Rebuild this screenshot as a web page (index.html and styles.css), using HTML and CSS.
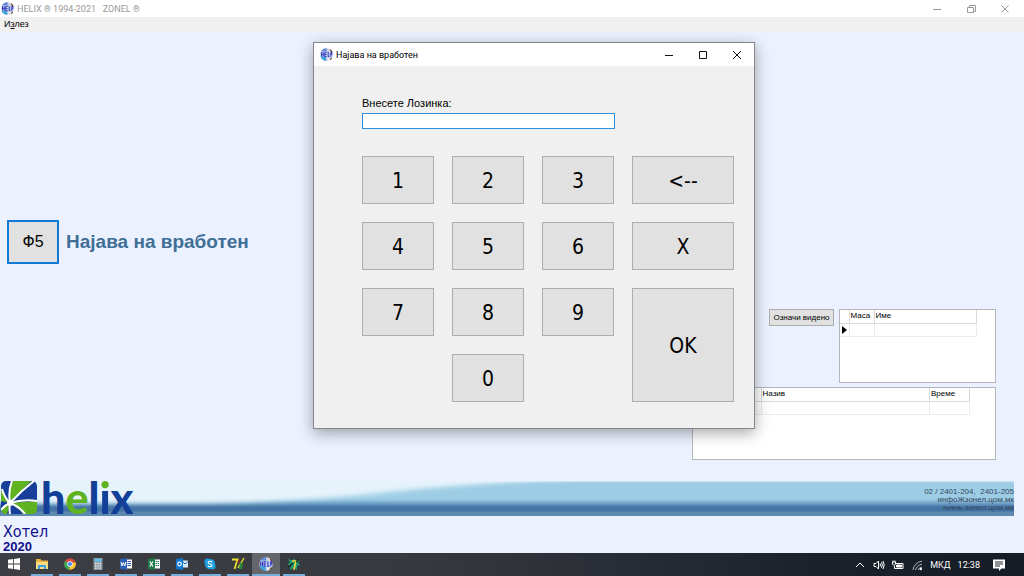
FILE: index.html
```html
<!DOCTYPE html>
<html lang="mk">
<head>
    <meta charset="UTF-8">
    <meta name="viewport" content="width=device-width, initial-scale=1.0">
    <title>HELIX</title>
    <link rel="stylesheet" href="styles.css">
</head>
<body>

<!-- Shared app icon -->
<svg class="defs" aria-hidden="true">
    <defs>
        <symbol id="app-icon" viewBox="0 0 12 12">
            <circle cx="6" cy="6" r="5.8" fill="#b9ccec"/>
            <path d="M1 3 A5.8 5.8 0 0 1 6 0.2 L6 3 Z" fill="#5f86d2"/>
            <path d="M7 0.4 A5.8 5.8 0 0 1 11 3.2 L8 3 Z" fill="#e6d8cc"/>
            <path d="M0.6 8 L5 8 L6 11.8 A5.8 5.8 0 0 1 0.6 8 Z" fill="#37a3dd"/>
            <path d="M6.5 9 L10.5 9 A5.8 5.8 0 0 1 7 11.7 Z" fill="#f4ede6"/>
            <path d="M9.5 1.5 L11.3 4 M10.8 9 L9.4 10.7" stroke="#59362f" fill="none"/>
            <path d="M1.4 3.8 V8 M3 3.8 V8 M1.4 6 H3 M6.2 4 H4.4 V8 H6.2 M4.4 6 H6 M7.6 3.8 V8 H8.8 M10 8 V4 H11 V6 H10" stroke="#3a38bd" stroke-width="0.9" fill="none"/>
        </symbol>
    </defs>
</svg>

<header class="titlebar">
    <svg class="app-icon"><use href="#app-icon"/></svg>
    <span class="title">HELIX ® 1994-2021 &nbsp; ZONEL ®</span>
    <div class="window-buttons">
        <button aria-label="Minimize"><svg viewBox="0 0 10 10"><path d="M1 5.5H9"/></svg></button>
        <button aria-label="Restore"><svg viewBox="0 0 10 10"><path d="M1.5 3.5H7.5V8.5H1.5ZM3.5 3V1.5H9.5V7.5H8"/></svg></button>
        <button aria-label="Close"><svg viewBox="0 0 10 10"><path d="M1.5 1.5L8.5 8.5M8.5 1.5L1.5 8.5"/></svg></button>
    </div>
</header>

<nav class="menubar">
    <a href="#">И<u>з</u>лез</a>
</nav>

<main class="workspace">
    <div class="launch">
        <button id="f5">Ф5</button>
        <label for="f5">Најава на вработен</label>
    </div>

    <div class="panels">
        <div class="panel-row">
            <button class="mark-seen">Означи видено</button>
            <div class="panel panel-tables">
                <table>
                    <colgroup><col class="col-mark"><col class="col-table"><col class="col-name"></colgroup>
                    <thead><tr><th></th><th>Маса</th><th>Име</th></tr></thead>
                    <tbody><tr><td><span class="row-arrow"></span></td><td></td><td></td></tr></tbody>
                </table>
            </div>
        </div>
        <div class="panel panel-orders">
            <table>
                <colgroup><col class="col-mark"><col class="col-code"><col class="col-item"><col class="col-time"></colgroup>
                <thead><tr><th></th><th></th><th>Назив</th><th>Време</th></tr></thead>
                <tbody><tr><td></td><td></td><td></td><td></td></tr></tbody>
            </table>
        </div>
    </div>
</main>

<section class="banner">
    <svg class="banner-light" viewBox="0 0 1014 35" preserveAspectRatio="none">
        <defs>
            <filter id="soft" x="-10%" y="-30%" width="120%" height="160%"><feGaussianBlur stdDeviation="14 2"/></filter>
        </defs>
        <path d="M-60 -6 H610 C520 1 440 5 390 11 C340 17 290 20 200 22 H-60 Z" fill="#e6f3fb" filter="url(#soft)"/>
    </svg>
    <div class="logo">
        <svg viewBox="0 0 36 33">
            <rect width="36" height="33" rx="5" fill="#173f9a"/>
            <path d="M11 0H30L9 22Q8 10 11 0Z" fill="#5fb321"/>
            <path d="M9 22L36 20V28Q36 33 31 33H22Q17 26 9 22Z" fill="#5fb321"/>
            <path d="M0 9L9 22L0 20Z" fill="#5fb321"/>
            <path d="M0 27L9 22L6 33H4Q0 32 0 28Z" fill="#5fb321"/>
            <g fill="none" stroke="#fff" stroke-width="2">
                <path d="M11 0Q7 10 9 22"/>
                <path d="M33 0Q20 10 9 22"/>
                <path d="M36 20Q22 18 9 22"/>
                <path d="M24 33Q18 25 9 22"/>
                <path d="M9 33Q8 28 9 22"/>
                <path d="M0 29Q4 24 9 22"/>
                <path d="M1 8Q3 16 9 22"/>
            </g>
            <circle cx="9" cy="22" r="3" fill="#fff"/>
        </svg>
        <span class="logo-text">h<span class="green">e</span>l<span class="logo-i">i</span>x</span>
    </div>
    <address class="contact">
        <span>02 / 2401-204, &nbsp;2401-205</span>
        <span>инфоЖзонел.цом.мк</span>
        <span>њњњ.зонел.цом.мк</span>
    </address>
</section>

<section class="product">
    <div class="product-name">Хотел</div>
    <div class="product-year">2020</div>
</section>

<form class="dialog">
    <div class="dialog-title">
        <svg class="app-icon"><use href="#app-icon"/></svg>
        <span class="title">Најава на вработен</span>
        <div class="window-buttons">
            <button type="button" aria-label="Minimize"><svg viewBox="0 0 10 10"><path d="M1 5.5H9"/></svg></button>
            <button type="button" aria-label="Maximize"><svg viewBox="0 0 10 10"><path d="M1.5 1.5H8.5V8.5H1.5Z"/></svg></button>
            <button type="button" aria-label="Close"><svg viewBox="0 0 10 10"><path d="M1 1L9 9M9 1L1 9"/></svg></button>
        </div>
    </div>
    <div class="dialog-body">
        <label for="password">Внесете Лозинка:</label>
        <input type="password" id="password">
        <div class="keypad">
            <button type="button">1</button>
            <button type="button">2</button>
            <button type="button">3</button>
            <button type="button">&lt;--</button>
            <button type="button">4</button>
            <button type="button">5</button>
            <button type="button">6</button>
            <button type="button">X</button>
            <button type="button">7</button>
            <button type="button">8</button>
            <button type="button">9</button>
            <button type="button" class="key-ok">OK</button>
            <button type="button" class="key-zero">0</button>
        </div>
    </div>
</form>

<footer class="taskbar">
    <button class="task start" aria-label="Start">
        <svg viewBox="0 0 14 14"><path d="M1 2.8L6.2 2V6.6H1ZM7 1.9L13 1V6.6H7ZM1 7.4H6.2V12L1 11.2ZM7 7.4H13V13L7 12.1Z" fill="#fff"/></svg>
    </button>
    <button class="task" aria-label="File Explorer">
        <svg viewBox="0 0 14 14"><path d="M1 2H5.5L6.5 3.5H13V12H1Z" fill="#e9b23c"/><path d="M1 5H13V12H1Z" fill="#fbdc7d"/><path d="M3 12V8H11V12H9V10H5V12Z" fill="#3f9fe0"/></svg>
    </button>
    <button class="task" aria-label="Chrome">
        <svg viewBox="0 0 14 14"><circle cx="7" cy="7" r="5.8" fill="#e0483b"/><path d="M7 7L2 4A5.8 5.8 0 0 0 6.6 12.8Z" fill="#3aa757"/><path d="M7 7L12.6 5.2A5.8 5.8 0 0 1 6.6 12.8Z" fill="#f9c630"/><circle cx="7" cy="7" r="2.8" fill="#fff"/><circle cx="7" cy="7" r="2.1" fill="#4a87ee"/></svg>
    </button>
    <button class="task" aria-label="Calculator">
        <svg viewBox="0 0 14 14"><path d="M2.5 1H11.5V13H2.5Z" fill="#8d989f"/><path d="M3.5 2H10.5V4.5H3.5Z" fill="#56c1ea"/><path d="M4 6.5H10M4 8.8H10M4 11.1H10" stroke="#e8edf0" stroke-width="1.3" stroke-dasharray="1.4 .9"/></svg>
    </button>
    <button class="task" aria-label="Word">
        <svg viewBox="0 0 14 14"><path d="M7 2.5H13V11.5H7Z" fill="#fff"/><path d="M8.5 4.5H12M8.5 6.5H12M8.5 8.5H12" stroke="#2b579a"/><path d="M1 2L8 1V13L1 12Z" fill="#2b5fb4"/><path d="M2 5L3 9L4.4 5.5L5.8 9L7 5" stroke="#fff" fill="none"/></svg>
    </button>
    <button class="task" aria-label="Excel">
        <svg viewBox="0 0 14 14"><path d="M7 2.5H13V11.5H7Z" fill="#fff"/><path d="M8.5 4.5H12M8.5 6.5H12M8.5 8.5H12" stroke="#217346" stroke-dasharray="1.5 .5"/><path d="M1 2L8 1V13L1 12Z" fill="#1f7a46"/><path d="M2.8 4.5L6 9.5M6 4.5L2.8 9.5" stroke="#fff" stroke-width="1.2"/></svg>
    </button>
    <button class="task" aria-label="Outlook">
        <svg viewBox="0 0 14 14"><path d="M7 3.5H13V10.5H7Z" fill="#d6eafa"/><path d="M8 5L10 7L13 4.5" stroke="#0a72c8" fill="none"/><path d="M1 2L8 1V13L1 12Z" fill="#0a78d4"/><circle cx="4.5" cy="7" r="1.8" stroke="#fff" stroke-width="1.2" fill="none"/></svg>
    </button>
    <button class="task" aria-label="Skype">
        <svg viewBox="0 0 14 14"><circle cx="7" cy="7" r="5.2" fill="#1e9fe0"/><circle cx="4.4" cy="4.4" r="3" fill="#1e9fe0"/><circle cx="9.6" cy="9.6" r="3" fill="#1e9fe0"/><path d="M9 5.2C8.4 3.8 5.2 3.9 5.2 5.6C5.2 7.3 9 6.6 9 8.5C9 10.1 5.6 10.2 4.9 8.7" stroke="#fff" stroke-width="1.2" fill="none"/></svg>
    </button>
    <button class="task" aria-label="Total Commander">
        <svg viewBox="0 0 14 14"><path d="M1 2.5H6.5L3.5 12" stroke="#e9e22c" stroke-width="1.8" fill="none"/><path d="M13 1L7 11" stroke="#f1e52e" stroke-width="1.4"/><path d="M9 6H12L11 12H8Z" fill="#29883b"/><path d="M6 5L9 2L8 6Z" fill="#a82b2b"/></svg>
    </button>
    <button class="task active" aria-label="Helix">
        <svg viewBox="0 0 12 12"><use href="#app-icon"/></svg>
    </button>
    <button class="task" aria-label="Service">
        <svg viewBox="0 0 14 14"><path d="M1 2L6 3.5L7 1L8 3.5L13 2L11 6L13.5 8L10 9L10 13L7 11L3 13L3.5 9L0.5 7L3 5.5Z" fill="#1f9a72"/><path d="M5 4L9 4L8 8L7 13" stroke="#eddb3c" stroke-width="1.5" fill="none"/><path d="M2 10L6 6M12 2L9 5" stroke="#171717" stroke-width="1.3"/></svg>
    </button>

    <div class="tray">
        <svg class="tray-icon" viewBox="0 0 12 12"><path d="M2 8L6 4L10 8"/></svg>
        <svg class="tray-icon" viewBox="0 0 12 12"><path d="M1 4.5H3L5.5 2V10L3 7.5H1ZM7 4.5Q8 6 7 7.5M8.5 3.2Q10.2 6 8.5 8.8M10 2Q12.4 6 10 10"/></svg>
        <svg class="tray-icon" viewBox="0 0 12 12"><path d="M3 4.5H11V9.5H2.5V7"/><path d="M4.5 6H9.5V8H4.5Z" fill="#fff"/><path d="M0.5 3H3.5V5L2 6.5L0.5 5ZM1 1.5V3M3 1.5V3"/></svg>
        <svg class="tray-icon" viewBox="0 0 12 12"><path d="M2 11Q3 4 11 2M4.5 11Q5.5 6.5 11 5M7 11Q7.5 8.8 11 8" stroke="#aeb4bb"/><circle cx="9.8" cy="10" r="1.2" fill="#fff" stroke="none"/></svg>
        <span>МКД</span>
        <time>12:38</time>
        <svg class="tray-note" viewBox="0 0 14 14"><path d="M1 1.5H13V10.5H9.5L7 13V10.5H1Z" fill="#fff"/><path d="M3 4H11M3 6H11M3 8H8" stroke="#1b222c"/></svg>
    </div>
</footer>

</body>
</html>
```
FILE: styles.css
```css
* {
    box-sizing: border-box;
}
body {
    margin: 0;
    min-height: 100vh;
    display: flex;
    flex-direction: column;
    position: relative;
    background-color: #ebf1fe;
    color: #000;
    font-family: "Liberation Sans", Arial, sans-serif;
    font-size: 9px;
}
button {
    padding: 0;
    border: 1px solid #adadad;
    background-color: #e1e1e1;
    color: #000;
    font-family: inherit;
}
.defs {
    position: absolute;
    width: 0;
    height: 0;
}

/* Main window frame */
.titlebar {
    display: flex;
    align-items: center;
    height: 17px;
    padding: 0 2px 0 1px;
    background-color: #fff;
    color: #999;
}
.app-icon {
    width: 13px;
    height: 13px;
}
.title {
    margin-left: 3px;
    font-family: Roboto, sans-serif;
    white-space: nowrap;
}
.window-buttons {
    display: flex;
    align-self: stretch;
    margin-left: auto;
}
.window-buttons button {
    display: flex;
    align-items: center;
    justify-content: center;
    width: 34px;
    border: none;
    background: none;
}
.window-buttons svg {
    width: 10px;
    height: 10px;
    fill: none;
    stroke: #999;
}
.menubar {
    height: 15px;
    padding-left: 4px;
    background-color: #f0f0f0;
    line-height: 14px;
}
.menubar a {
    color: #000;
    text-decoration: none;
}

/* Workspace */
.workspace {
    flex: 1;
    display: flex;
    justify-content: space-between;
    align-items: flex-end;
    padding: 0 28px 21px 7px;
}
.launch {
    display: flex;
    align-items: center;
    align-self: center;
    gap: 7px;
    padding-bottom: 8px;
}
.launch button {
    width: 52px;
    height: 44px;
    border: 2px solid #0f7bd7;
    font-size: 16px;
}
.launch label {
    color: #3f6f97;
    font-size: 19px;
    font-weight: bold;
}
.panels {
    display: flex;
    flex-direction: column;
    align-items: flex-end;
    gap: 4px;
    font-size: 8px;
}
.panel-row {
    display: flex;
    align-items: flex-start;
    gap: 5px;
}
.mark-seen {
    width: 65px;
    height: 17px;
    font-size: 8px;
    white-space: nowrap;
}
.panel {
    border: 1px solid #b4b6ba;
    background-color: #fff;
}
.panel-tables {
    width: 157px;
    height: 74px;
}
.panel-orders {
    width: 304px;
    height: 73px;
}
.panel table {
    table-layout: fixed;
    border-collapse: collapse;
}
.panel th,
.panel td {
    height: 13px;
    padding: 0 1px;
    border-right: 1px solid #ececec;
    border-bottom: 1px solid #ececec;
    font-weight: normal;
    line-height: 12px;
    text-align: left;
}
.panel th {
    border-color: #d8d8d8;
}
.panel-tables table {
    width: 137px;
}
.panel-orders table {
    width: 277px;
}
.col-mark {
    width: 9px;
}
.col-table {
    width: 25px;
}
.col-code {
    width: 59px;
}
.col-time {
    width: 40px;
}
.row-arrow {
    display: block;
    width: 0;
    margin-left: 1px;
    border: 4px solid transparent;
    border-left: 5px solid #000;
    border-right: none;
}

/* Banner */
.banner {
    position: relative;
    display: flex;
    justify-content: space-between;
    height: 35px;
    margin-right: 10px;
    background: linear-gradient(#d3e7f3 0, #9dcde5 2px, #9dcde5 18px, #7fb0d1 21px, #4575a5 26px, #4173a5 30px, #5d88b0 31px, #6089b0 35px);
}
.banner-light {
    position: absolute;
    width: 100%;
    height: 100%;
}
.logo {
    position: relative;
    display: flex;
    gap: 4px;
    padding-left: 1px;
}
.logo svg {
    width: 36px;
    height: 33px;
}
.logo-text {
    color: #123f98;
    font-family: Lato, sans-serif;
    font-size: 43px;
    font-weight: 900;
    line-height: 33px;
}
.green {
    color: #5fb321;
}
.logo-i {
    background: linear-gradient(#5fb321 18px, #123f98 18px);
    background-clip: text;
    color: transparent;
}
.contact {
    position: relative;
    display: flex;
    flex-direction: column;
    padding-top: 7px;
    color: #35475e;
    font-size: 8px;
    font-style: normal;
    line-height: 8px;
    text-align: right;
}

.product {
    height: 37px;
    padding: 7px 3px 0;
    color: #10108a;
    font-family: "DejaVu Sans Condensed", "DejaVu Sans", sans-serif;
}
.product-name {
    font-size: 16px;
    line-height: 18px;
}
.product-year {
    font-family: "Liberation Sans", Arial, sans-serif;
    font-size: 13px;
    font-weight: bold;
    line-height: 12px;
}

/* Login dialog */
.dialog {
    position: absolute;
    top: 42px;
    left: 313px;
    border: 1px solid #85878c;
    background-color: #f0f0f0;
    box-shadow: 0 4px 14px rgba(0, 0, 0, 0.35);
}
.dialog-title {
    display: flex;
    align-items: center;
    height: 23px;
    padding-left: 6px;
    background-color: #fff;
}
.dialog-title .window-buttons svg {
    stroke: #111;
}
.dialog-body {
    padding: 31px 20px 26px 48px;
}
.dialog-body label {
    display: block;
    font-size: 11px;
    line-height: 12px;
}
.dialog-body input {
    display: block;
    width: 253px;
    height: 16px;
    margin: 4px 0 27px;
    padding: 0 3px;
    border: 1px solid #2f8fdd;
    background-color: #fff;
    outline: none;
}
.keypad {
    display: grid;
    grid-template-columns: repeat(3, 72px) 102px;
    grid-auto-rows: 48px;
    gap: 18px;
}
.keypad button {
    padding-top: 2px;
    font-family: "DejaVu Sans Condensed", "DejaVu Sans", sans-serif;
    font-size: 21px;
}
.key-ok {
    grid-row: span 2;
}
.key-zero {
    grid-column: 2;
}

/* Taskbar */
.taskbar {
    display: flex;
    height: 23px;
    background: linear-gradient(90deg, #3d3e43, #37393f 40%, #1b212b 80%, #161c26);
    color: #fff;
}
.task {
    display: flex;
    align-items: center;
    justify-content: center;
    width: 28px;
    border: none;
    border-bottom: 2px solid #76aedb;
    background: none;
    background-clip: padding-box;
}
.task svg {
    width: 14px;
    height: 14px;
}
.task:not(.start):not(.active) {
    width: 22px;
    margin: 0 3px;
}
.task.start {
    border-color: transparent;
}
.task.active {
    background-color: #65666b;
}
.tray {
    display: flex;
    align-items: center;
    gap: 7px;
    margin-left: auto;
    padding-right: 18px;
    font-family: Roboto, sans-serif;
    font-size: 9px;
}
.tray-icon {
    width: 12px;
    height: 12px;
    fill: none;
    stroke: #fff;
}
.tray-note {
    width: 14px;
    height: 14px;
    margin-left: 5px;
}
```
